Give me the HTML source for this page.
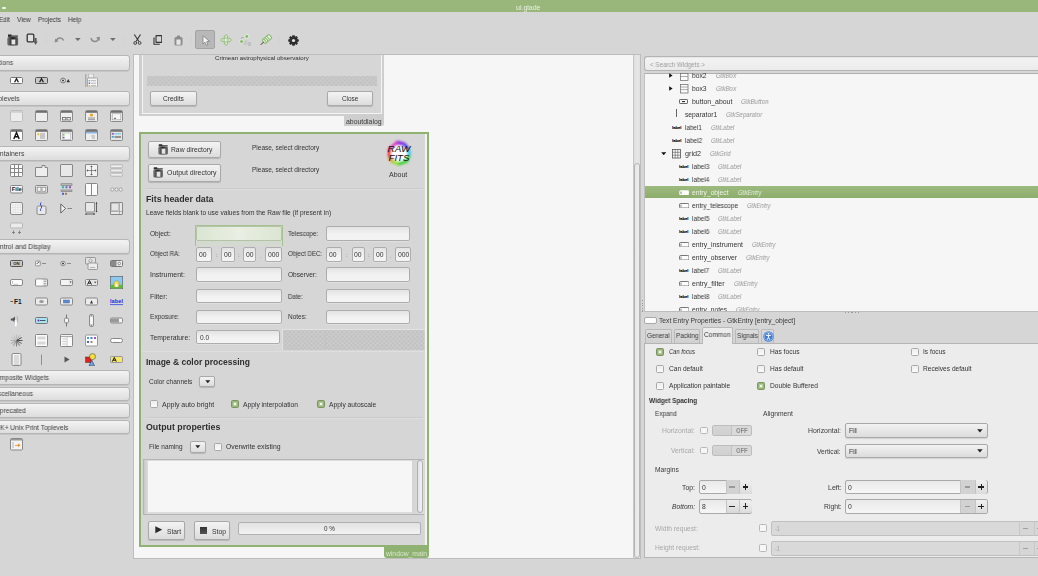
<!DOCTYPE html>
<html><head><meta charset="utf-8">
<style>
*{box-sizing:border-box;margin:0;padding:0}
html,body{width:1038px;height:576px;overflow:hidden;background:#d6d6d6;font-family:"Liberation Sans",sans-serif;color:#3c3c3c;position:relative}
.a{position:absolute}
.t{position:absolute;white-space:nowrap;line-height:1;will-change:transform}
.btn{position:absolute;border:1px solid #a9a9a9;border-radius:2px;background:linear-gradient(#f4f4f4,#dcdcdc);box-shadow:0 1px 1px rgba(0,0,0,.13)}
.ent{position:absolute;border:1px solid #adadad;border-radius:2px;background:linear-gradient(#e2e2e2,#f0f0f0 45%,#f3f3f3);box-shadow:0 1px 0 rgba(255,255,255,.5)}
.cb{position:absolute;width:8px;height:8px;border:1px solid #a8a8a8;border-radius:1.5px;background:linear-gradient(#efefef,#f9f9f9)}
.cbx{position:absolute;width:8px;height:8px;border:1px solid #6f9352;border-radius:1.5px;background:#8cae6d}
.cbx::before,.cbx::after{content:"";position:absolute;left:3px;top:1px;width:1px;height:4px;background:#f2f7ee;transform:rotate(45deg)}
.cbx::after{transform:rotate(-45deg)}
.ph{position:absolute;left:-8px;width:138px;border:1px solid #b5b5b5;border-radius:3px;background:linear-gradient(#f3f3f3,#dddddd);box-shadow:0 1px 0 rgba(0,0,0,.08)}
.chk{background-color:#cfcfcf;background-image:linear-gradient(45deg,#c2c2c2 25%,transparent 25%,transparent 75%,#c2c2c2 75%),linear-gradient(45deg,#c2c2c2 25%,transparent 25%,transparent 75%,#c2c2c2 75%);background-size:4px 4px;background-position:0 0,2px 2px}
</style></head><body>
<div class="a" style="left:0px;top:0px;width:1038px;height:12px;background:#9ab77b"></div>
<div class="a" style="left:2px;top:7px;width:4px;height:1.5px;background:#f0f4ec;border-radius:1px"></div>
<div class="t" style="left:516.3px;top:3px;line-height:10px;font-size:6.994px;color:#e9f0e2;font-weight:normal;font-style:normal;">ui.glade</div>
<div class="t" style="left:-0.8px;top:15px;line-height:10px;font-size:6.9px;color:#383838;font-weight:normal;font-style:normal;transform:scaleX(0.9082);transform-origin:0 0;">Edit</div>
<div class="t" style="left:16.9px;top:15px;line-height:10px;font-size:6.9px;color:#383838;font-weight:normal;font-style:normal;transform:scaleX(0.9370);transform-origin:0 0;">View</div>
<div class="t" style="left:38.2px;top:15px;line-height:10px;font-size:6.9px;color:#383838;font-weight:normal;font-style:normal;transform:scaleX(0.9187);transform-origin:0 0;">Projects</div>
<div class="t" style="left:68.1px;top:15px;line-height:10px;font-size:6.9px;color:#383838;font-weight:normal;font-style:normal;transform:scaleX(0.9437);transform-origin:0 0;">Help</div>
<svg class="a" style="left:7px;top:34px" width="12" height="12" viewBox="0 0 12 12"><defs><linearGradient id="og" x1="0" x2="1"><stop offset="0" stop-color="#777"/><stop offset=".5" stop-color="#222"/><stop offset="1" stop-color="#666"/></linearGradient></defs><rect x="1" y="0.5" width="3.5" height="2" fill="#222"/><rect x="1" y="1.5" width="10" height="1.2" fill="#333"/><rect x="0.3" y="3" width="10.8" height="8.6" rx="1.5" fill="url(#og)"/><rect x="4.5" y="5.5" width="3.8" height="5" fill="#e8e8e8"/></svg>
<svg class="a" style="left:26px;top:33px" width="13" height="13" viewBox="0 0 13 13"><rect x="1.2" y="1.2" width="6.6" height="7.6" rx="1" fill="#e0e0e0" stroke="#333" stroke-width="1.3"/><rect x="8.6" y="5" width="2" height="3.5" fill="#555"/><path d="M7.6 8.3h4l-2 3.6z" fill="#555"/></svg>
<div class="a" style="left:46px;top:33px;width:1px;height:13px;background:linear-gradient(rgba(0,0,0,0),rgba(0,0,0,.025),rgba(0,0,0,0))"></div>
<div class="a" style="left:123.5px;top:33px;width:1px;height:13px;background:linear-gradient(rgba(0,0,0,0),rgba(0,0,0,.025),rgba(0,0,0,0))"></div>
<div class="a" style="left:191px;top:33px;width:1px;height:13px;background:linear-gradient(rgba(0,0,0,0),rgba(0,0,0,.025),rgba(0,0,0,0))"></div>
<div class="a" style="left:279px;top:33px;width:1px;height:13px;background:linear-gradient(rgba(0,0,0,0),rgba(0,0,0,.025),rgba(0,0,0,0))"></div>
<svg class="a" style="left:54px;top:36px" width="11" height="7" viewBox="0 0 11 7"><path d="M2 5.5 C3 1.5 7.5 0.5 9.8 4.5" fill="none" stroke="#8c8c8c" stroke-width="1.4"/><path d="M0.6 6.5 L1.2 2.5 L4.5 5.2z" fill="#8c8c8c"/></svg>
<svg class="a" style="left:74.7px;top:38px" width="6" height="3.5" viewBox="0 0 6 3.5"><path d="M0 0h5.7L2.85 3z" fill="#6e6e6e"/></svg>
<svg class="a" style="left:110.1px;top:38px" width="6" height="3.5" viewBox="0 0 6 3.5"><path d="M0 0h5.7L2.85 3z" fill="#6e6e6e"/></svg>
<svg class="a" style="left:90px;top:36px" width="11" height="7" viewBox="0 0 11 7"><path d="M1 2 C2 6.5 7 6.5 8.5 3" fill="none" stroke="#8c8c8c" stroke-width="1.4"/><path d="M6 1.4 L10 0.8 L9.5 5z" fill="#8c8c8c"/></svg>
<svg class="a" style="left:133px;top:34px" width="9" height="11" viewBox="0 0 9 11"><path d="M1.3 0.5 L6 7.5 M7.5 0.5 L3 7.5" stroke="#333" stroke-width="1.1" fill="none"/><circle cx="2.2" cy="9" r="1.4" fill="none" stroke="#444" stroke-width="1"/><circle cx="6.6" cy="9" r="1.4" fill="none" stroke="#444" stroke-width="1"/></svg>
<svg class="a" style="left:152.5px;top:35px" width="9.5" height="10" viewBox="0 0 9.5 10"><rect x="3" y="0.6" width="5.8" height="6.8" rx=".5" fill="none" stroke="#333" stroke-width="1.1"/><path d="M1 2.5 V9.2 H6.8" fill="none" stroke="#333" stroke-width="1.1"/></svg>
<svg class="a" style="left:173.5px;top:34.5px" width="9" height="11" viewBox="0 0 9 11"><rect x="0.5" y="2" width="8" height="8.6" rx="1.5" fill="#8c8c8c"/><rect x="2.8" y="0.5" width="3.4" height="2.5" rx="1" fill="#8c8c8c"/><rect x="2.4" y="4.5" width="4.2" height="5.2" fill="#e6e6e6"/></svg>
<div class="a" style="left:195px;top:30px;width:20px;height:19px;background:#b8b8b8;border:1px solid #a3a3a3;border-radius:2px"></div>
<svg class="a" style="left:201.5px;top:35px" width="9" height="11" viewBox="0 0 9 11"><path d="M1 0.8 V9 L3 7.3 L4.5 10.3 L6 9.6 L4.6 6.6 L7.6 6.4z" fill="#f4f4f4" stroke="#777" stroke-width=".7"/></svg>
<svg class="a" style="left:219.5px;top:34px" width="12" height="12" viewBox="0 0 12 12"><path d="M6 0.5 L8 2.8 H7 V5 H9.2 V4 L11.5 6 L9.2 8 V7 H7 V9.2 H8 L6 11.5 L4 9.2 H5 V7 H2.8 V8 L0.5 6 L2.8 4 V5 H5 V2.8 H4z" fill="#dfeed6" stroke="#8ab86f" stroke-width=".9"/></svg>
<svg class="a" style="left:239px;top:34px" width="13" height="12" viewBox="0 0 13 12"><path d="M2.5 3.5 H5 M2.5 3.5 V5.5" stroke="#b0b0b0" stroke-width="1" fill="none"/><rect x="4" y="6.5" width="4.5" height="4.5" fill="#c8c8c8"/><path d="M9 9 H12 M9 11 H12" stroke="#a8a8a8" stroke-width=".9"/><circle cx="7.8" cy="2.4" r="2" fill="#86bc68" stroke="#f0f6ea" stroke-width=".8"/><circle cx="2.6" cy="7.6" r="2" fill="#86bc68" stroke="#f0f6ea" stroke-width=".8"/></svg>
<svg class="a" style="left:260px;top:33.5px" width="12.5" height="11.5" viewBox="0 0 12.5 11.5"><g transform="rotate(-40 7 5)"><rect x="2.5" y="2.6" width="9" height="4.8" rx="1" fill="#e9f3e3" stroke="#86b86a" stroke-width="1"/><path d="M4.6 2.8 V7.2 M6.6 2.8 V7.2 M8.6 2.8 V7.2" stroke="#86b86a" stroke-width="1"/></g><path d="M0.8 10.8 L3.5 8" stroke="#333" stroke-width="1"/></svg>
<svg class="a" style="left:287.5px;top:34.5px" width="11" height="11" viewBox="0 0 11 11"><g transform="translate(5.5 5.5)"><path d="M-1.1 -5.3 H1.1 L1.5 -3.7 L2.9 -4.5 L4.4 -3 L3.6 -1.6 L5.3 -1.1 V1.1 L3.6 1.6 L4.4 3 L3 4.4 L1.6 3.6 L1.1 5.3 H-1.1 L-1.6 3.6 L-3 4.4 L-4.4 3 L-3.6 1.6 L-5.3 1.1 V-1.1 L-3.6 -1.6 L-4.4 -3 L-3 -4.4 L-1.6 -3.6z" fill="#2e2e2e"/><circle r="1.6" fill="#e6e6e6"/></g></svg>
<div class="ph" style="top:55px;height:15.5px"></div>
<div class="t" style="left:-9px;top:58px;line-height:10px;font-size:6.9px;color:#3e3e3e;font-weight:normal;font-style:normal;transform:scaleX(0.9766);transform-origin:0 0;">Actions</div>
<div class="ph" style="top:91px;height:14.5px"></div>
<div class="t" style="left:-9px;top:94px;line-height:10px;font-size:6.9px;color:#3e3e3e;font-weight:normal;font-style:normal;transform:scaleX(0.9939);transform-origin:0 0;">Toplevels</div>
<div class="ph" style="top:146px;height:14.5px"></div>
<div class="t" style="left:-9px;top:149px;line-height:10px;font-size:6.9px;color:#3e3e3e;font-weight:normal;font-style:normal;transform:scaleX(0.9980);transform-origin:0 0;">Containers</div>
<div class="ph" style="top:239px;height:14.5px"></div>
<div class="t" style="left:-9px;top:242px;line-height:10px;font-size:6.9px;color:#3e3e3e;font-weight:normal;font-style:normal;transform:scaleX(0.9898);transform-origin:0 0;">Control and Display</div>
<div class="ph" style="top:370px;height:14.5px"></div>
<div class="t" style="left:-9px;top:373px;line-height:10px;font-size:6.9px;color:#3e3e3e;font-weight:normal;font-style:normal;transform:scaleX(0.9695);transform-origin:0 0;">Composite Widgets</div>
<div class="ph" style="top:386.5px;height:14.5px"></div>
<div class="t" style="left:-9px;top:389px;line-height:10px;font-size:6.9px;color:#3e3e3e;font-weight:normal;font-style:normal;transform:scaleX(0.9605);transform-origin:0 0;">Miscellaneous</div>
<div class="ph" style="top:403px;height:14.5px"></div>
<div class="t" style="left:-9px;top:406px;line-height:10px;font-size:6.9px;color:#3e3e3e;font-weight:normal;font-style:normal;transform:scaleX(0.9811);transform-origin:0 0;">Deprecated</div>
<div class="ph" style="top:419.5px;height:14px"></div>
<div class="t" style="left:-9px;top:423px;line-height:10px;font-size:6.9px;color:#3e3e3e;font-weight:normal;font-style:normal;transform:scaleX(0.9603);transform-origin:0 0;">GTK+ Unix Print Toplevels</div>
<svg class="a" style="left:10px;top:74.0px" width="13" height="13" viewBox="0 0 13 13"><rect x=".5" y="3.5" width="12" height="6" rx="1" fill="#fafafa" stroke="#777"/><path d="M4.6 8.3 L6.5 4.6 L8.4 8.3" fill="none" stroke="#222" stroke-width="1.3"/></svg>
<svg class="a" style="left:35px;top:74.0px" width="13" height="13" viewBox="0 0 13 13"><rect x=".5" y="3.5" width="12" height="6" rx="1" fill="#c9c9c9" stroke="#555"/><path d="M4.6 8.3 L6.5 4.6 L8.4 8.3" fill="none" stroke="#222" stroke-width="1.3"/></svg>
<svg class="a" style="left:60px;top:74.0px" width="13" height="13" viewBox="0 0 13 13"><circle cx="3" cy="6.5" r="2.4" fill="#f5f5f5" stroke="#555" stroke-width=".8"/><circle cx="3" cy="6.5" r="1" fill="#333"/><path d="M6.5 8.2 L8.2 5 L10 8.2z" fill="#333"/></svg>
<svg class="a" style="left:85px;top:74.0px" width="13" height="13" viewBox="0 0 13 13"><path d="M.8 0 V13" stroke="#999" stroke-width="1"/><rect x="3.5" y="0" width="5" height="4" fill="#eee" stroke="#aaa" stroke-width=".6"/><rect x="2.5" y="4" width="10" height="9" rx=".8" fill="#f6f6f6" stroke="#999" stroke-width=".8"/><rect x="3.6" y="6" width="1.6" height="1.4" fill="#5bb8c8"/><rect x="3.6" y="8.5" width="1.6" height="1.4" fill="#8a4cc8"/><rect x="3.6" y="11" width="1.6" height="1.2" fill="#e8b02c"/><path d="M6 6.7H11 M6 9.2H11 M6 11.6H11" stroke="#999" stroke-width=".7"/></svg>
<svg class="a" style="left:10px;top:109.5px" width="13" height="13" viewBox="0 0 13 13"><rect x=".5" y=".5" width="12" height="11" rx="1" fill="#ececec" stroke="#bdbdbd"/><rect x="1" y="1" width="11" height="1.8" fill="#cfcfcf"/></svg>
<svg class="a" style="left:35px;top:109.5px" width="13" height="13" viewBox="0 0 13 13"><rect x=".5" y=".5" width="12" height="11" rx="1" fill="#eeeeee" stroke="#8a8a8a"/><rect x="1" y="1" width="11" height="1.8" fill="#6f6f6f"/></svg>
<svg class="a" style="left:60px;top:109.5px" width="13" height="13" viewBox="0 0 13 13"><rect x=".5" y=".5" width="12" height="11" rx="1" fill="#eeeeee" stroke="#8a8a8a"/><rect x="1" y="1" width="11" height="1.8" fill="#6f6f6f"/><rect x="2.5" y="7.5" width="3.3" height="2.5" fill="none" stroke="#666" stroke-width=".8"/><rect x="7" y="7.5" width="3.3" height="2.5" fill="none" stroke="#666" stroke-width=".8"/></svg>
<svg class="a" style="left:85px;top:109.5px" width="13" height="13" viewBox="0 0 13 13"><rect x=".5" y=".5" width="12" height="11" rx="1" fill="#eeeeee" stroke="#8a8a8a"/><rect x="1" y="1" width="11" height="1.8" fill="#6f6f6f"/><circle cx="6.5" cy="5" r="1.6" fill="#f0a020"/><path d="M3 8H10 M3 9.7H10" stroke="#888" stroke-width=".9"/></svg>
<svg class="a" style="left:110px;top:109.5px" width="13" height="13" viewBox="0 0 13 13"><rect x=".5" y=".5" width="12" height="11" rx="1" fill="#eeeeee" stroke="#8a8a8a"/><rect x="1" y="1" width="11" height="1.8" fill="#6f6f6f"/><rect x="2.2" y="3.8" width="8.6" height="6" fill="#f8f8f8" stroke="#999" stroke-width=".6"/><path d="M4 8.3H6" stroke="#444" stroke-width=".9"/></svg>
<svg class="a" style="left:10px;top:128.5px" width="13" height="13" viewBox="0 0 13 13"><rect x=".5" y=".5" width="12" height="11" rx="1" fill="#fdfdfd" stroke="#8a8a8a"/><rect x="1" y="1" width="11" height="1.8" fill="#6f6f6f"/><path d="M3.8 10 L6.5 3.5 L9.2 10 M4.8 7.8 H8.2" fill="none" stroke="#111" stroke-width="1.4"/></svg>
<svg class="a" style="left:35px;top:128.5px" width="13" height="13" viewBox="0 0 13 13"><rect x=".5" y=".5" width="12" height="11" rx="1" fill="#eeeeee" stroke="#8a8a8a"/><rect x="1" y="1" width="11" height="1.8" fill="#6f6f6f"/><circle cx="3.3" cy="5.3" r="1.1" fill="#f0c020"/><path d="M5 5H10 M5 7H10 M5 9H10" stroke="#a0a0a0" stroke-width="1"/></svg>
<svg class="a" style="left:60px;top:128.5px" width="13" height="13" viewBox="0 0 13 13"><rect x=".5" y=".5" width="12" height="11" rx="1" fill="#eeeeee" stroke="#8a8a8a"/><rect x="1" y="1" width="11" height="1.8" fill="#6f6f6f"/><rect x="2.3" y="4" width="8.5" height="6.5" fill="#f8f8f8" stroke="#999" stroke-width=".5"/><rect x="3" y="5" width="1.5" height="1.6" fill="#7bc64a"/><rect x="3" y="7.8" width="1.5" height="1.6" fill="#8a4cc8"/></svg>
<svg class="a" style="left:85px;top:128.5px" width="13" height="13" viewBox="0 0 13 13"><rect x=".5" y=".5" width="12" height="11" rx="1" fill="#eeeeee" stroke="#8a8a8a"/><rect x="1" y="1" width="11" height="1.8" fill="#6f6f6f"/><rect x="1" y="3" width="11" height="1.5" fill="#8cb4e0"/><path d="M6 7H10 M7 9H10" stroke="#aaa" stroke-width="1"/></svg>
<svg class="a" style="left:110px;top:128.5px" width="13" height="13" viewBox="0 0 13 13"><rect x=".5" y=".5" width="12" height="11" rx="1" fill="#e4e4e4" stroke="#8a8a8a"/><rect x="1" y="1" width="11" height="1.8" fill="#777"/><rect x="1.8" y="4" width="2" height="1.6" fill="#8a4cc8"/><rect x="1.8" y="7" width="2" height="1.6" fill="#3aa0e0"/><rect x="4.5" y="4" width="6.5" height="1.6" fill="#8fd0e8"/><path d="M4.5 8 H11" stroke="#444" stroke-width="1"/></svg>
<svg class="a" style="left:10px;top:163.5px" width="13" height="13" viewBox="0 0 13 13"><rect x=".5" y=".5" width="12" height="12" rx="1" fill="#fafafa" stroke="#888"/><path d="M4.5 1V12 M8.5 1V12 M1 4.5H12 M1 8.5H12" stroke="#888" stroke-width="1"/></svg>
<svg class="a" style="left:35px;top:163.5px" width="13" height="13" viewBox="0 0 13 13"><path d="M.5 3.5 H7 V1.5 H10 V3.5 H12.5 V12.5 H.5z" fill="#eee" stroke="#888"/></svg>
<svg class="a" style="left:60px;top:163.5px" width="13" height="13" viewBox="0 0 13 13"><rect x=".5" y=".5" width="12" height="12" rx=".5" fill="#e8e8e8" stroke="#888"/></svg>
<svg class="a" style="left:85px;top:163.5px" width="13" height="13" viewBox="0 0 13 13"><rect x=".5" y=".5" width="12" height="12" rx=".5" fill="#f2f2f2" stroke="#888"/><path d="M6.5 2V11 M2 6.5H11" stroke="#666" stroke-width=".7"/><path d="M6.5 1.5l-1.3 1.5h2.6z M6.5 11.5l-1.3-1.5h2.6z M1.5 6.5l1.5-1.3v2.6z M11.5 6.5l-1.5-1.3v2.6z" fill="#555"/></svg>
<svg class="a" style="left:110px;top:163.5px" width="13" height="13" viewBox="0 0 13 13"><rect x=".5" y=".8" width="12" height="3" rx="1.2" fill="#eee" stroke="#aaa" stroke-width=".8"/><rect x=".5" y="5" width="12" height="3" rx="1.2" fill="#eee" stroke="#aaa" stroke-width=".8"/><rect x=".5" y="9.2" width="12" height="3" rx="1.2" fill="#eee" stroke="#aaa" stroke-width=".8"/></svg>
<svg class="a" style="left:10px;top:182.5px" width="13" height="13" viewBox="0 0 13 13"><rect x=".5" y="2.5" width="12" height="7.5" rx="1" fill="#f4f4f4" stroke="#888"/><text x="1.8" y="8.4" font-size="5.4" font-weight="bold" font-family="Liberation Sans" fill="#222" textLength="10" lengthAdjust="spacingAndGlyphs">File</text></svg>
<svg class="a" style="left:35px;top:182.5px" width="13" height="13" viewBox="0 0 13 13"><rect x=".5" y="2.5" width="12" height="7.5" rx="1" fill="#e4e4e4" stroke="#888"/><rect x="2.2" y="4.2" width="3.8" height="4" fill="#f6f6f6" stroke="#777" stroke-width=".6"/><rect x="7" y="4.2" width="3.8" height="4" fill="#f6f6f6" stroke="#777" stroke-width=".6"/></svg>
<svg class="a" style="left:60px;top:182.5px" width="13" height="13" viewBox="0 0 13 13"><rect x="1" y=".8" width="11" height="1.6" fill="#bbb" stroke="#666" stroke-width=".5"/><rect x="1" y="7" width="11" height="1.6" fill="#bbb" stroke="#666" stroke-width=".5"/><rect x="2" y="3.2" width="2" height="2" fill="#3cb0b0"/><rect x="5.5" y="3.2" width="2" height="2" fill="#4a7ad8"/><rect x="9" y="3.2" width="2" height="2" fill="#9a4cc8"/><rect x="2" y="9.8" width="2" height="2" fill="#4a60d0"/><rect x="5" y="9.8" width="2" height="2" fill="#a08050"/></svg>
<svg class="a" style="left:85px;top:182.5px" width="13" height="13" viewBox="0 0 13 13"><rect x=".5" y=".5" width="12" height="12" rx="1" fill="#fbfbfb" stroke="#888"/><path d="M6.5 1V12" stroke="#888"/></svg>
<svg class="a" style="left:110px;top:182.5px" width="13" height="13" viewBox="0 0 13 13"><circle cx="2.3" cy="6.5" r="1.6" fill="#f2f2f2" stroke="#888" stroke-width=".7"/><circle cx="6.5" cy="6.5" r="1.6" fill="#f2f2f2" stroke="#888" stroke-width=".7"/><circle cx="10.7" cy="6.5" r="1.6" fill="#f2f2f2" stroke="#888" stroke-width=".7"/></svg>
<svg class="a" style="left:10px;top:202.0px" width="13" height="13" viewBox="0 0 13 13"><rect x=".5" y=".5" width="12" height="12" rx="1.5" fill="#f6f6f6" stroke="#888"/><path d="M3 1.5V11.5 M5.5 1.5V11.5 M8 1.5V11.5 M10.5 1.5V11.5 M1.5 3H11.5 M1.5 5.5H11.5 M1.5 8H11.5 M1.5 10.5H11.5" stroke="#ddd" stroke-width=".6"/></svg>
<svg class="a" style="left:35px;top:202.0px" width="13" height="13" viewBox="0 0 13 13"><rect x="2" y="4" width="9" height="8.5" rx="1.5" fill="#e8e8e8" stroke="#888"/><path d="M6 .5 Q4.5 2 6 3.5 Q7.5 5 6 6.5 Q4.5 8 6 9" fill="none" stroke="#3050e8" stroke-width="1"/></svg>
<svg class="a" style="left:60px;top:202.0px" width="13" height="13" viewBox="0 0 13 13"><path d="M.8 2 V11 L5.5 6.5z" fill="#f4f4f4" stroke="#555" stroke-width=".9"/><path d="M7.5 6.5 H12" stroke="#888" stroke-width="1"/></svg>
<svg class="a" style="left:85px;top:202.0px" width="13" height="13" viewBox="0 0 13 13"><rect x=".5" y=".5" width="9" height="9.5" rx=".5" fill="#e8e8e8" stroke="#888"/><path d="M11.5 .5V10 M.5 12 H10" stroke="#444" stroke-width=".8"/><path d="M11.5 0l-1 1.5h2z M11.5 10.5l-1-1.5h2z M0 12l1.5-1v2z M10 12l-1.5-1v2z" fill="#444"/></svg>
<svg class="a" style="left:110px;top:202.0px" width="13" height="13" viewBox="0 0 13 13"><rect x=".5" y=".5" width="12" height="12" rx=".5" fill="#e8e8e8" stroke="#888"/><rect x="1.5" y="1.5" width="7" height="7" fill="#e4e4e4" stroke="#999" stroke-width=".5"/><path d="M9.5 1V12 M1 9.5H12" stroke="#888" stroke-width=".6"/></svg>
<svg class="a" style="left:10px;top:221.5px" width="13" height="13" viewBox="0 0 13 13"><rect x=".5" y="1" width="12" height="5" rx="1" fill="#ebebeb" stroke="#b8b8b8"/><path d="M3.5 8.5V12 M2 10.5H5 M9.5 8.5V12 M8 10.5H11" stroke="#777" stroke-width=".8"/></svg>
<svg class="a" style="left:10px;top:257.0px" width="13" height="13" viewBox="0 0 13 13"><rect x=".5" y="3.5" width="12" height="6" rx="1" fill="#c8c8c8" stroke="#555"/><text x="3.2" y="8.4" font-size="4.2" font-weight="bold" font-family="Liberation Sans" fill="#222">ON</text></svg>
<svg class="a" style="left:35px;top:257.0px" width="13" height="13" viewBox="0 0 13 13"><rect x=".5" y="4" width="4.8" height="4.8" rx=".8" fill="#f4f4f4" stroke="#777" stroke-width=".7"/><path d="M1.8 7 L3 5.5 L4.3 5" stroke="#333" stroke-width=".8" fill="none"/><path d="M7 6.5H11" stroke="#777" stroke-width=".8"/></svg>
<svg class="a" style="left:60px;top:257.0px" width="13" height="13" viewBox="0 0 13 13"><circle cx="3" cy="6.5" r="2.3" fill="#f4f4f4" stroke="#666" stroke-width=".7"/><circle cx="3" cy="6.5" r="1" fill="#333"/><path d="M7 6.5H11" stroke="#777" stroke-width=".8"/></svg>
<svg class="a" style="left:85px;top:257.0px" width="13" height="13" viewBox="0 0 13 13"><rect x=".5" y=".5" width="10" height="6.5" rx=".8" fill="#e2e2e2" stroke="#888" stroke-width=".8"/><path d="M5.5 2 L7.5 3.8 L5.5 5.5 L3.5 3.8z" fill="none" stroke="#888" stroke-width=".7"/><rect x="3" y="6" width="9.5" height="6.5" rx=".8" fill="#ececec" stroke="#888" stroke-width=".8"/><path d="M5 10.5H10" stroke="#999" stroke-width=".7"/></svg>
<svg class="a" style="left:110px;top:257.0px" width="13" height="13" viewBox="0 0 13 13"><rect x=".5" y="3.5" width="12" height="6" rx="1" fill="#f2f2f2" stroke="#777"/><rect x="1" y="4" width="5.5" height="5" fill="#8a8a8a"/><circle cx="9.2" cy="6.5" r="1.4" fill="none" stroke="#666" stroke-width=".7"/></svg>
<svg class="a" style="left:10px;top:276.0px" width="13" height="13" viewBox="0 0 13 13"><rect x=".5" y="3.5" width="12" height="6" rx="1.5" fill="#fdfdfd" stroke="#888"/><path d="M2.5 5V8 M3.5 8.3H8" stroke="#999" stroke-width=".6"/></svg>
<svg class="a" style="left:35px;top:276.0px" width="13" height="13" viewBox="0 0 13 13"><rect x=".5" y="3" width="12" height="7" rx="1" fill="#e4e4e4" stroke="#888"/><rect x="1.2" y="3.6" width="6.5" height="5.8" fill="#fdfdfd"/><path d="M10 4.5l-1 1h2z M10 8.5l-1-1h2z" fill="#555"/></svg>
<svg class="a" style="left:60px;top:276.0px" width="13" height="13" viewBox="0 0 13 13"><rect x=".5" y="3.5" width="12" height="6" rx="1" fill="#e6e6e6" stroke="#888"/><rect x="1.2" y="4.1" width="7.5" height="4.8" fill="#f4f4f4"/><path d="M9.6 5.6h2l-1 1.5z" fill="#333"/></svg>
<svg class="a" style="left:85px;top:276.0px" width="13" height="13" viewBox="0 0 13 13"><rect x=".5" y="3.5" width="12" height="6" rx="1" fill="#e6e6e6" stroke="#888"/><path d="M2.5 8.6 L4.5 4.5 L6.5 8.6 M3.3 7.2H5.7" fill="none" stroke="#222" stroke-width="1"/><path d="M9 5.8h2.4l-1.2 1.5z" fill="#333"/></svg>
<svg class="a" style="left:110px;top:276.0px" width="13" height="13" viewBox="0 0 13 13"><rect x=".3" y=".3" width="12.4" height="12.4" fill="#8cc8f0" stroke="#555" stroke-width=".6"/><rect x=".6" y="8.8" width="11.8" height="3.6" fill="#58c030"/><path d="M4 11 V6.5 Q6.5 2.8 9 6.5 V11z" fill="#f6e04a" stroke="#886" stroke-width=".5"/><rect x="5.6" y="8" width="1.8" height="3" fill="#fff"/></svg>
<svg class="a" style="left:10px;top:295.0px" width="13" height="13" viewBox="0 0 13 13"><path d="M.5 6.5H3" stroke="#333" stroke-width=".8"/><text x="4" y="9" font-size="6.5" font-weight="bold" font-family="Liberation Sans" fill="#111">F1</text></svg>
<svg class="a" style="left:35px;top:295.0px" width="13" height="13" viewBox="0 0 13 13"><rect x=".5" y="3" width="12" height="7" rx="1.2" fill="#ececec" stroke="#888"/><ellipse cx="6.5" cy="6.5" rx="2.3" ry="1.5" fill="#999"/></svg>
<svg class="a" style="left:60px;top:295.0px" width="13" height="13" viewBox="0 0 13 13"><rect x=".5" y="3" width="12" height="7" rx="1.2" fill="#ececec" stroke="#888"/><rect x="3.5" y="5" width="6" height="3" fill="#5a90d8" stroke="#335" stroke-width=".3"/></svg>
<svg class="a" style="left:85px;top:295.0px" width="13" height="13" viewBox="0 0 13 13"><rect x=".5" y="3" width="12" height="7" rx="1.2" fill="#ececec" stroke="#888"/><path d="M5 8.5 L6.5 5.2 L8 8.5z" fill="#333"/></svg>
<svg class="a" style="left:110px;top:295.0px" width="13" height="13" viewBox="0 0 13 13"><text x="0" y="8.3" font-size="5.6" font-weight="bold" font-family="Liberation Sans" fill="#1a2ee8" textLength="13" lengthAdjust="spacingAndGlyphs">label</text><path d="M0 9.6H13" stroke="#1a2ee8" stroke-width=".7"/></svg>
<svg class="a" style="left:10px;top:314.0px" width="13" height="13" viewBox="0 0 13 13"><path d="M.8 4.5H2.5L5 2.5V8.5L2.5 6.5H.8z" fill="#555"/><path d="M7 2.5 Q8.5 5.5 7 8.5" stroke="#99a" stroke-width=".7" fill="none"/><rect x="4.8" y="6" width="2.2" height="6.8" fill="#fdfdfd" stroke="#ccd" stroke-width=".4"/></svg>
<svg class="a" style="left:35px;top:314.0px" width="13" height="13" viewBox="0 0 13 13"><rect x=".5" y="3.5" width="12" height="6" rx="1" fill="#a8e4f0" stroke="#777"/><circle cx="3.5" cy="6.5" r="1" fill="#8020c0"/><path d="M5 6.5H10.5" stroke="#333" stroke-width=".8"/></svg>
<svg class="a" style="left:60px;top:314.0px" width="13" height="13" viewBox="0 0 13 13"><path d="M6.5 .5V12.5" stroke="#777" stroke-width="1"/><rect x="4.5" y="4.2" width="4" height="4.6" rx="1" fill="#f4f4f4" stroke="#777" stroke-width=".8"/></svg>
<svg class="a" style="left:85px;top:314.0px" width="13" height="13" viewBox="0 0 13 13"><rect x="4.5" y=".5" width="4" height="12" rx="1.5" fill="#e4e4e4" stroke="#777" stroke-width=".8"/><rect x="5.3" y="3" width="2.4" height="7" fill="#fafafa"/><path d="M6.5 1.2l-.9 1h1.8z M6.5 11.8l-.9-1h1.8z" fill="#444"/></svg>
<svg class="a" style="left:110px;top:314.0px" width="13" height="13" viewBox="0 0 13 13"><rect x=".5" y="4" width="12" height="5" rx="1.2" fill="#f6f6f6" stroke="#888"/><rect x="1" y="4.5" width="8" height="4" fill="#9a9a9a"/></svg>
<svg class="a" style="left:10px;top:333.5px" width="13" height="13" viewBox="0 0 13 13"><path d="M6.5 6.5 L12.50 6.50" stroke="#444" stroke-width=".9"/><path d="M6.5 6.5 L11.70 9.50" stroke="#555" stroke-width=".9"/><path d="M6.5 6.5 L9.50 11.70" stroke="#666" stroke-width=".9"/><path d="M6.5 6.5 L6.50 12.50" stroke="#777" stroke-width=".9"/><path d="M6.5 6.5 L3.50 11.70" stroke="#888" stroke-width=".9"/><path d="M6.5 6.5 L1.30 9.50" stroke="#999" stroke-width=".9"/><path d="M6.5 6.5 L0.50 6.50" stroke="#aaa" stroke-width=".9"/><path d="M6.5 6.5 L1.30 3.50" stroke="#bbb" stroke-width=".9"/><path d="M6.5 6.5 L3.50 1.30" stroke="#bbb" stroke-width=".9"/><path d="M6.5 6.5 L6.50 0.50" stroke="#bbb" stroke-width=".9"/><path d="M6.5 6.5 L9.50 1.30" stroke="#aaa" stroke-width=".9"/><path d="M6.5 6.5 L11.70 3.50" stroke="#333" stroke-width=".9"/></svg>
<svg class="a" style="left:35px;top:333.5px" width="13" height="13" viewBox="0 0 13 13"><rect x=".5" y=".5" width="12" height="12" rx=".8" fill="#fbfbfb" stroke="#888"/><rect x="2.5" y="2.5" width="8" height="3" fill="#d8d8d8"/><rect x="2.5" y="7.5" width="8" height="3" fill="#d8d8d8"/></svg>
<svg class="a" style="left:60px;top:333.5px" width="13" height="13" viewBox="0 0 13 13"><rect x=".5" y=".5" width="12" height="12" rx=".8" fill="#fbfbfb" stroke="#888"/><path d="M1 2.5H12" stroke="#aaa" stroke-width="1.2"/><path d="M2.5 5H6 M2.5 7.5H6 M2.5 10H6 M7 3V12" stroke="#bbb" stroke-width=".8"/></svg>
<svg class="a" style="left:85px;top:333.5px" width="13" height="13" viewBox="0 0 13 13"><rect x=".5" y="1" width="12" height="11" rx=".8" fill="#fbfbfb" stroke="#999"/><rect x="2" y="3" width="2" height="2" fill="#40b0b0"/><rect x="5.5" y="3" width="2" height="2" fill="#4a7ad8"/><rect x="9" y="3" width="2" height="2" fill="#a050d0"/><rect x="2" y="7" width="2" height="2" fill="#4a60d0"/><rect x="5.5" y="7" width="2" height="2" fill="#b08850"/></svg>
<svg class="a" style="left:110px;top:333.5px" width="13" height="13" viewBox="0 0 13 13"><rect x=".5" y="4.5" width="12" height="4" rx="2" fill="#fdfdfd" stroke="#888"/></svg>
<svg class="a" style="left:10px;top:352.5px" width="13" height="13" viewBox="0 0 13 13"><rect x="2" y=".5" width="9" height="12" rx="1.2" fill="#f4f4f4" stroke="#888"/><path d="M4 3H9 M4 5H9 M4 7H9 M4 9H9 M4 11H9" stroke="#aaa" stroke-width=".7"/></svg>
<svg class="a" style="left:35px;top:352.5px" width="13" height="13" viewBox="0 0 13 13"><path d="M6.5 1.5V12" stroke="#888" stroke-width=".9"/></svg>
<svg class="a" style="left:60px;top:352.5px" width="13" height="13" viewBox="0 0 13 13"><path d="M4.5 3.5 L9.5 6.5 L4.5 9.5z" fill="#555"/></svg>
<svg class="a" style="left:85px;top:352.5px" width="13" height="13" viewBox="0 0 13 13"><rect x="0.5" y="4" width="5.5" height="5.5" fill="#e42020" stroke="#333" stroke-width=".5"/><path d="M4 12.8 L6.8 7 L9.6 12.8z" fill="#6a9ee8" stroke="#333" stroke-width=".5"/><circle cx="7.5" cy="3.6" r="3" fill="#f8e040" stroke="#333" stroke-width=".5"/></svg>
<svg class="a" style="left:110px;top:352.5px" width="13" height="13" viewBox="0 0 13 13"><rect x=".5" y="3.5" width="12" height="6" rx=".8" fill="#f6e66a" stroke="#999"/><path d="M2.3 8.6 L4.3 4.5 L6.3 8.6 M3.1 7.2H5.5" fill="none" stroke="#111" stroke-width="1"/></svg>
<svg class="a" style="left:10px;top:437.5px" width="13" height="13" viewBox="0 0 13 13"><rect x=".5" y=".5" width="12" height="11.5" rx="1" fill="#f2f2f2" stroke="#888"/><rect x="1" y="1" width="11" height="1.5" fill="#999"/><path d="M3 4V10" stroke="#aaa" stroke-width=".8"/><path d="M5 7H8 V5.5 L10.5 7.3 L8 9 V7.8 H5z" fill="#f08a20"/></svg>
<div class="a" style="left:133px;top:55px;width:1px;height:504px;background:#c4c4c4"></div>
<div class="a" style="left:133px;top:54px;width:508px;height:505px;border:1px solid #bdbdbd;background:#f6f6f6"></div>
<div class="a" style="left:633px;top:55px;width:7px;height:503px;border-left:1px solid #c8c8c8;background:linear-gradient(90deg,#dcdcdc,#e6e6e6 40%,#e2e2e2)"></div>
<div class="a" style="left:633.5px;top:163px;width:6px;height:395px;border:1px solid #b5b5b5;border-radius:3px;background:linear-gradient(90deg,#e6e6e6,#efefef)"></div>
<div class="a" style="left:134px;top:55px;width:499px;height:503px;overflow:hidden">
<div class="a" style="left:5.3px;top:-25px;width:244.5px;height:86.3px;background:#cecece"></div>
<div class="a" style="left:7.7px;top:-25px;width:240.7px;height:84.2px;background:#f4f4f4"></div>
<div class="a" style="left:8.7px;top:-25px;width:238.5px;height:82.5px;background:#d6d6d6"></div>
<div class="a" style="left:210px;top:61px;width:39.8px;height:9.8px;background:#cecece;border-radius:0 0 2px 0"></div>
<div class="t" style="left:212px;top:62px;line-height:10px;font-size:6.9px;color:#3a3a3a;font-weight:normal;font-style:normal;">aboutdialog</div>
<div class="t" style="left:80.5px;top:-2px;line-height:10px;font-size:6.1px;color:#2e2e2e;font-weight:normal;font-style:normal;">Crimean astrophysical observatory</div>
<svg class="a" style="left:13px;top:21px" width="230" height="10" viewBox="0 0 230 10"><defs><pattern id="pk1" width="4.4" height="4.4" patternUnits="userSpaceOnUse"><rect width="4.4" height="4.4" fill="#d4d4d4"/><path d="M0 -1.8L1.8 0L0 1.8L-1.8 0z M4.4 -1.8L6.2 0L4.4 1.8L2.6 0z M0 2.6L1.8 4.4L0 6.2L-1.8 4.4z M4.4 2.6L6.2 4.4L4.4 6.2L2.6 4.4z M2.2 .4L4 2.2L2.2 4L.4 2.2z" fill="#c0c0c0"/></pattern></defs><rect width="230" height="10" fill="url(#pk1)"/></svg>
<div class="a" style="left:15.5px;top:36px;width:47px;height:14.5px;border:1px solid #a9a9a9;border-radius:2px;background:linear-gradient(#f4f4f4,#dcdcdc);box-shadow:0 1px 1px rgba(0,0,0,.15)"></div>
<div class="t" style="left:28.8px;top:39px;line-height:10px;font-size:6.6px;color:#333;font-weight:normal;font-style:normal;">Credits</div>
<div class="a" style="left:193.3px;top:36px;width:46px;height:14.5px;border:1px solid #a9a9a9;border-radius:2px;background:linear-gradient(#f4f4f4,#dcdcdc);box-shadow:0 1px 1px rgba(0,0,0,.15)"></div>
<div class="t" style="left:207.9px;top:39px;line-height:10px;font-size:6.4px;color:#333;font-weight:normal;font-style:normal;">Close</div>
<div class="a" style="left:5.3px;top:77px;width:289.8px;height:415.4px;background:#8fb171"></div>
<div class="a" style="left:7px;top:79px;width:286px;height:411px;background:#f2f4f0"></div>
<div class="a" style="left:7px;top:79px;width:284px;height:410.8px;background:#d6d6d6"></div>
<div class="a" style="left:249.8px;top:492px;width:45.3px;height:11px;background:#8fb171;border-radius:0 0 3px 3px"></div>
<div class="t" style="left:251.8px;top:494px;line-height:10px;font-size:6.75px;color:#d7e6ca;font-weight:normal;font-style:normal;">window_main</div>
<div class="a" style="left:13.5px;top:85.6px;width:73.8px;height:17.8px;border:1px solid #a9a9a9;border-radius:2px;background:linear-gradient(#f3f3f3,#dcdcdc);box-shadow:0 1px 1px rgba(0,0,0,.15)"></div>
<div class="a" style="left:13.5px;top:109px;width:73.8px;height:17.8px;border:1px solid #a9a9a9;border-radius:2px;background:linear-gradient(#f3f3f3,#dcdcdc);box-shadow:0 1px 1px rgba(0,0,0,.15)"></div>
<svg class="a" style="left:23.7px;top:88.6px" width="10.5" height="11" viewBox="0 0 10.5 11"><defs><linearGradient id="fg" x1="0" x2="1"><stop offset="0" stop-color="#888"/><stop offset=".45" stop-color="#222"/><stop offset="1" stop-color="#777"/></linearGradient></defs><rect x=".8" y=".3" width="3.5" height="1.8" fill="#222"/><rect x=".8" y="1.3" width="9" height="1.1" fill="#333"/><rect x=".2" y="2.6" width="9.8" height="8" rx="1.6" fill="url(#fg)"/><rect x="3.6" y="4.6" width="3.8" height="5.2" fill="#e4e4e4"/></svg>
<svg class="a" style="left:19px;top:112px" width="10.5" height="11" viewBox="0 0 10.5 11"><defs><linearGradient id="fg" x1="0" x2="1"><stop offset="0" stop-color="#888"/><stop offset=".45" stop-color="#222"/><stop offset="1" stop-color="#777"/></linearGradient></defs><rect x=".8" y=".3" width="3.5" height="1.8" fill="#222"/><rect x=".8" y="1.3" width="9" height="1.1" fill="#333"/><rect x=".2" y="2.6" width="9.8" height="8" rx="1.6" fill="url(#fg)"/><rect x="3.6" y="4.6" width="3.8" height="5.2" fill="#e4e4e4"/></svg>
<div class="t" style="left:36.9px;top:90px;line-height:10px;font-size:6.75px;color:#333;font-weight:normal;font-style:normal;">Raw directory</div>
<div class="t" style="left:33px;top:113px;line-height:10px;font-size:6.97px;color:#333;font-weight:normal;font-style:normal;">Output directory</div>
<div class="t" style="left:117.6px;top:88px;line-height:10px;font-size:6.5px;color:#333;font-weight:normal;font-style:normal;">Please, select directory</div>
<div class="t" style="left:117.6px;top:110px;line-height:10px;font-size:6.5px;color:#333;font-weight:normal;font-style:normal;">Please, select directory</div>
<svg class="a" style="left:250px;top:83px" width="30" height="30" viewBox="0 0 30 30"><defs><filter id="lb" x="-20%" y="-20%" width="140%" height="140%"><feGaussianBlur stdDeviation=".9"/></filter></defs><g filter="url(#lb)" transform="translate(15 15.5)"><path d="M0 0L-2 -13L6 -11z" fill="#8a2ee0"/><path d="M0 0L6 -11L11 -5z" fill="#5a40f0"/><path d="M0 0L11 -5L12 2z" fill="#30c8f0"/><path d="M0 0L12 2L9 9z" fill="#40d850"/><path d="M0 0L9 9L-1 12z" fill="#30d020"/><path d="M0 0L-1 12L-8 9z" fill="#90e020"/><path d="M0 0L-8 9L-11 4z" fill="#f08020"/><path d="M0 0L-11 4L-11 -5z" fill="#f01818"/><path d="M0 0L-11 -5L-2 -13z" fill="#e030c0"/><circle r="8.2" fill="#fff"/></g><g font-family="Liberation Sans" font-style="italic" fill="#111" text-anchor="middle"><text x="15" y="13.8" font-size="9.2" textLength="23" lengthAdjust="spacingAndGlyphs">RAW</text><text x="15" y="23" font-size="9.2" textLength="21" lengthAdjust="spacingAndGlyphs">FITS</text></g></svg>
<div class="t" style="left:255.4px;top:115px;line-height:10px;font-size:7px;color:#333;font-weight:normal;font-style:normal;">About</div>
<div class="a" style="left:12px;top:133px;width:277px;height:1px;background:#cbcbcb"></div>
<div class="a" style="left:12px;top:134px;width:277px;height:1px;background:#dedede"></div>
<div class="t" style="left:11.6px;top:139px;line-height:10px;font-size:8.8px;color:#2f2f2f;font-weight:bold;font-style:normal;">Fits header data</div>
<div class="t" style="left:12px;top:153px;line-height:10px;font-size:6.608px;color:#333;font-weight:normal;font-style:normal;">Leave fields blank to use values from the Raw file (if present in)</div>
<div class="t" style="left:15.8px;top:174px;line-height:10px;font-size:6.564px;color:#333;font-weight:normal;font-style:normal;">Object:</div>
<div class="t" style="left:15.8px;top:194px;line-height:10px;font-size:6.6px;color:#333;font-weight:normal;font-style:normal;transform:scaleX(0.9368);transform-origin:0 0;">Object RA:</div>
<div class="t" style="left:15.8px;top:215px;line-height:10px;font-size:6.996px;color:#333;font-weight:normal;font-style:normal;">Instrument:</div>
<div class="t" style="left:15.8px;top:237px;line-height:10px;font-size:6.96px;color:#333;font-weight:normal;font-style:normal;">Filter:</div>
<div class="t" style="left:15.8px;top:257px;line-height:10px;font-size:6.6px;color:#333;font-weight:normal;font-style:normal;transform:scaleX(0.9825);transform-origin:0 0;">Exposure:</div>
<div class="t" style="left:15.8px;top:278px;line-height:10px;font-size:6.806px;color:#333;font-weight:normal;font-style:normal;">Temperature:</div>
<div class="t" style="left:154.4px;top:174px;line-height:10px;font-size:6.6px;color:#333;font-weight:normal;font-style:normal;transform:scaleX(0.9602);transform-origin:0 0;">Telescope:</div>
<div class="t" style="left:154.4px;top:194px;line-height:10px;font-size:6.6px;color:#333;font-weight:normal;font-style:normal;transform:scaleX(0.9323);transform-origin:0 0;">Object DEC:</div>
<div class="t" style="left:154.4px;top:215px;line-height:10px;font-size:6.582px;color:#333;font-weight:normal;font-style:normal;">Observer:</div>
<div class="t" style="left:154.4px;top:237px;line-height:10px;font-size:6.6px;color:#333;font-weight:normal;font-style:normal;transform:scaleX(0.9317);transform-origin:0 0;">Date:</div>
<div class="t" style="left:154.4px;top:257px;line-height:10px;font-size:6.504px;color:#333;font-weight:normal;font-style:normal;">Notes:</div>
<div class="a" style="left:61px;top:169.8px;width:88px;height:21.2px;border:1px solid #a6c292;background:#d6dbd1"></div>
<div class="a" style="left:62px;top:170.6px;width:86px;height:15.4px;border:1px solid #b4c4a6;border-radius:2px;background:linear-gradient(90deg,#dbe5d2,#e9efe3 50%,#dbe5d2)"></div>
<div class="a" style="left:62px;top:186px;width:86px;height:4.8px;background:#d5dad0"></div>
<div class="a" style="left:192.2px;top:170.8px;width:83.8px;height:15px;border:1px solid #adadad;border-radius:2px;background:linear-gradient(#e3e3e3,#f1f1f1 50%,#f4f4f4);box-shadow:0 .5px 0 #e8e8e8"></div>
<div class="a" style="left:62.4px;top:212.3px;width:85.2px;height:15.199999999999989px;border:1px solid #adadad;border-radius:2px;background:linear-gradient(#e3e3e3,#f1f1f1 50%,#f4f4f4);box-shadow:0 .5px 0 #e8e8e8"></div>
<div class="a" style="left:192.2px;top:212.3px;width:83.8px;height:15.199999999999989px;border:1px solid #adadad;border-radius:2px;background:linear-gradient(#e3e3e3,#f1f1f1 50%,#f4f4f4);box-shadow:0 .5px 0 #e8e8e8"></div>
<div class="a" style="left:62.4px;top:233.7px;width:85.2px;height:14.400000000000034px;border:1px solid #adadad;border-radius:2px;background:linear-gradient(#e3e3e3,#f1f1f1 50%,#f4f4f4);box-shadow:0 .5px 0 #e8e8e8"></div>
<div class="a" style="left:192.2px;top:233.7px;width:83.8px;height:14.400000000000034px;border:1px solid #adadad;border-radius:2px;background:linear-gradient(#e3e3e3,#f1f1f1 50%,#f4f4f4);box-shadow:0 .5px 0 #e8e8e8"></div>
<div class="a" style="left:62.4px;top:254.6px;width:85.2px;height:14.199999999999989px;border:1px solid #adadad;border-radius:2px;background:linear-gradient(#e3e3e3,#f1f1f1 50%,#f4f4f4);box-shadow:0 .5px 0 #e8e8e8"></div>
<div class="a" style="left:192.2px;top:254.6px;width:83.8px;height:14.199999999999989px;border:1px solid #adadad;border-radius:2px;background:linear-gradient(#e3e3e3,#f1f1f1 50%,#f4f4f4);box-shadow:0 .5px 0 #e8e8e8"></div>
<div class="a" style="left:62.4px;top:275.3px;width:83.6px;height:14px;border:1px solid #adadad;border-radius:2px;background:linear-gradient(#e3e3e3,#f1f1f1 50%,#f4f4f4);box-shadow:0 .5px 0 #e8e8e8"></div>
<div class="t" style="left:66px;top:278px;line-height:10px;font-size:6.6px;color:#333;font-weight:normal;font-style:normal;">0.0</div>
<div class="a" style="left:62.4px;top:192px;width:15.900000000000006px;height:14.5px;border:1px solid #adadad;border-radius:2px;background:linear-gradient(#e3e3e3,#f1f1f1 50%,#f4f4f4);box-shadow:0 .5px 0 #e8e8e8"></div>
<div class="t" style="left:64.7px;top:195px;line-height:10px;font-size:6.8px;color:#333;font-weight:normal;font-style:normal;">00</div>
<div class="a" style="left:87.2px;top:192px;width:13.5px;height:14.5px;border:1px solid #adadad;border-radius:2px;background:linear-gradient(#e3e3e3,#f1f1f1 50%,#f4f4f4);box-shadow:0 .5px 0 #e8e8e8"></div>
<div class="t" style="left:89.5px;top:195px;line-height:10px;font-size:6.8px;color:#333;font-weight:normal;font-style:normal;">00</div>
<div class="a" style="left:109.3px;top:192px;width:13.0px;height:14.5px;border:1px solid #adadad;border-radius:2px;background:linear-gradient(#e3e3e3,#f1f1f1 50%,#f4f4f4);box-shadow:0 .5px 0 #e8e8e8"></div>
<div class="t" style="left:111.6px;top:195px;line-height:10px;font-size:6.8px;color:#333;font-weight:normal;font-style:normal;">00</div>
<div class="a" style="left:131.4px;top:192px;width:16.200000000000045px;height:14.5px;border:1px solid #adadad;border-radius:2px;background:linear-gradient(#e3e3e3,#f1f1f1 50%,#f4f4f4);box-shadow:0 .5px 0 #e8e8e8"></div>
<div class="t" style="left:133.7px;top:195px;line-height:10px;font-size:6.8px;color:#333;font-weight:normal;font-style:normal;">000</div>
<div class="t" style="left:81.8px;top:195px;line-height:10px;font-size:6px;color:#666;font-weight:normal;font-style:normal;">:</div>
<div class="t" style="left:104.2px;top:195px;line-height:10px;font-size:6px;color:#666;font-weight:normal;font-style:normal;">:</div>
<div class="t" style="left:125.8px;top:196px;line-height:10px;font-size:6px;color:#666;font-weight:normal;font-style:normal;">.</div>
<div class="a" style="left:192.2px;top:192px;width:16.19999999999999px;height:14.5px;border:1px solid #adadad;border-radius:2px;background:linear-gradient(#e3e3e3,#f1f1f1 50%,#f4f4f4);box-shadow:0 .5px 0 #e8e8e8"></div>
<div class="t" style="left:194.5px;top:195px;line-height:10px;font-size:6.8px;color:#333;font-weight:normal;font-style:normal;">00</div>
<div class="a" style="left:217.5px;top:192px;width:13.0px;height:14.5px;border:1px solid #adadad;border-radius:2px;background:linear-gradient(#e3e3e3,#f1f1f1 50%,#f4f4f4);box-shadow:0 .5px 0 #e8e8e8"></div>
<div class="t" style="left:219.8px;top:195px;line-height:10px;font-size:6.8px;color:#333;font-weight:normal;font-style:normal;">00</div>
<div class="a" style="left:239.2px;top:192px;width:13.400000000000034px;height:14.5px;border:1px solid #adadad;border-radius:2px;background:linear-gradient(#e3e3e3,#f1f1f1 50%,#f4f4f4);box-shadow:0 .5px 0 #e8e8e8"></div>
<div class="t" style="left:241.5px;top:195px;line-height:10px;font-size:6.8px;color:#333;font-weight:normal;font-style:normal;">00</div>
<div class="a" style="left:261.3px;top:192px;width:16.19999999999999px;height:14.5px;border:1px solid #adadad;border-radius:2px;background:linear-gradient(#e3e3e3,#f1f1f1 50%,#f4f4f4);box-shadow:0 .5px 0 #e8e8e8"></div>
<div class="t" style="left:263.6px;top:195px;line-height:10px;font-size:6.8px;color:#333;font-weight:normal;font-style:normal;">000</div>
<div class="t" style="left:211.9px;top:195px;line-height:10px;font-size:6px;color:#666;font-weight:normal;font-style:normal;">:</div>
<div class="t" style="left:234.0px;top:195px;line-height:10px;font-size:6px;color:#666;font-weight:normal;font-style:normal;">:</div>
<div class="t" style="left:256.1px;top:196px;line-height:10px;font-size:6px;color:#666;font-weight:normal;font-style:normal;">.</div>
<div class="a" style="left:148px;top:274px;width:143px;height:1px;background:#e2e2e2"></div>
<div class="a" style="left:148px;top:274px;width:1px;height:21px;background:#e2e2e2"></div>
<svg class="a" style="left:149px;top:275px" width="141.5" height="20" viewBox="0 0 141.5 20"><defs><pattern id="pk2" width="4.4" height="4.4" patternUnits="userSpaceOnUse"><rect width="4.4" height="4.4" fill="#d4d4d4"/><path d="M0 -1.8L1.8 0L0 1.8L-1.8 0z M4.4 -1.8L6.2 0L4.4 1.8L2.6 0z M0 2.6L1.8 4.4L0 6.2L-1.8 4.4z M4.4 2.6L6.2 4.4L4.4 6.2L2.6 4.4z M2.2 .4L4 2.2L2.2 4L.4 2.2z" fill="#c0c0c0"/></pattern></defs><rect width="141.5" height="20" fill="url(#pk2)"/></svg>
<div class="a" style="left:190.5px;top:275px;width:0.8px;height:20px;background:#c2c2c2"></div>
<div class="a" style="left:8px;top:296px;width:282px;height:1px;background:#dedede"></div>
<div class="t" style="left:11.8px;top:302px;line-height:10px;font-size:8.5px;color:#2f2f2f;font-weight:bold;font-style:normal;">Image &amp; color processing</div>
<div class="t" style="left:14.7px;top:322px;line-height:10px;font-size:6.5px;color:#333;font-weight:normal;font-style:normal;">Color channels</div>
<div class="a" style="left:65.2px;top:320.7px;width:16.2px;height:11.6px;border:1px solid #a9a9a9;border-radius:2px;background:linear-gradient(#f3f3f3,#dcdcdc);box-shadow:0 1px 1px rgba(0,0,0,.15)"></div>
<svg class="a" style="left:70.5px;top:324.8px" width="6" height="4" viewBox="0 0 6 4"><path d="M.3 .3h5l-2.5 3z" fill="#222"/></svg>
<div class="a" style="left:15.8px;top:345.2px;width:8px;height:8px;border:1px solid #a9a9a9;border-radius:1.5px;background:linear-gradient(#eeeeee,#fafafa)"></div>
<div class="t" style="left:28px;top:345px;line-height:10px;font-size:6.98px;color:#333;font-weight:normal;font-style:normal;">Apply auto bright</div>
<div class="a" style="left:96.7px;top:345.2px;width:8px;height:8px;border:1px solid #7a9462;border-radius:1.5px;background:#97b779"></div>
<svg class="a" style="left:98.7px;top:347.2px" width="4" height="4" viewBox="0 0 4 4"><path d="M.6 .6L3.4 3.4M3.4 .6L.6 3.4" stroke="#f6f9f3" stroke-width="1.15"/></svg>
<div class="t" style="left:109px;top:345px;line-height:10px;font-size:6.7px;color:#333;font-weight:normal;font-style:normal;">Apply interpolation</div>
<div class="a" style="left:182.8px;top:345.2px;width:8px;height:8px;border:1px solid #7a9462;border-radius:1.5px;background:#97b779"></div>
<svg class="a" style="left:184.8px;top:347.2px" width="4" height="4" viewBox="0 0 4 4"><path d="M.6 .6L3.4 3.4M3.4 .6L.6 3.4" stroke="#f6f9f3" stroke-width="1.15"/></svg>
<div class="t" style="left:195px;top:345px;line-height:10px;font-size:6.7px;color:#333;font-weight:normal;font-style:normal;">Apply autoscale</div>
<div class="a" style="left:12px;top:361.5px;width:277px;height:1px;background:#cbcbcb"></div>
<div class="a" style="left:12px;top:362.5px;width:277px;height:1px;background:#dedede"></div>
<div class="t" style="left:11.8px;top:367px;line-height:10px;font-size:8.8px;color:#2f2f2f;font-weight:bold;font-style:normal;">Output properties</div>
<div class="t" style="left:14.7px;top:387px;line-height:10px;font-size:6.5px;color:#333;font-weight:normal;font-style:normal;">File naming</div>
<div class="a" style="left:55.9px;top:386.3px;width:15.9px;height:11.3px;border:1px solid #a9a9a9;border-radius:2px;background:linear-gradient(#f3f3f3,#dcdcdc);box-shadow:0 1px 1px rgba(0,0,0,.15)"></div>
<svg class="a" style="left:61px;top:390.2px" width="6" height="4" viewBox="0 0 6 4"><path d="M.3 .3h5l-2.5 3z" fill="#222"/></svg>
<div class="a" style="left:80px;top:388px;width:8px;height:8px;border:1px solid #a9a9a9;border-radius:1.5px;background:linear-gradient(#eeeeee,#fafafa)"></div>
<div class="t" style="left:92.4px;top:387px;line-height:10px;font-size:6.86px;color:#333;font-weight:normal;font-style:normal;">Overwrite existing</div>
<div class="a" style="left:9.2px;top:403.5px;width:281px;height:56.5px;border:1px solid #b4b4b4;background:#d2d2d2"></div>
<div class="a" style="left:10.2px;top:404.5px;width:279px;height:54.5px;background:linear-gradient(90deg,#c9c9c9,#dcdcdc 4px,#dcdcdc)"></div>
<div class="a" style="left:14.4px;top:406px;width:263.6px;height:51px;background:#f6f6f6"></div>
<div class="a" style="left:278px;top:404.5px;width:11.5px;height:54.5px;background:linear-gradient(90deg,#d4d4d4,#dedede)"></div>
<div class="a" style="left:283px;top:405.4px;width:6.2px;height:52.2px;border:1px solid #aeaeae;border-radius:3px;background:linear-gradient(90deg,#e4e4e4,#f0f0f0)"></div>
<div class="a" style="left:14px;top:466px;width:37px;height:18.8px;border:1px solid #a9a9a9;border-radius:2px;background:linear-gradient(#f3f3f3,#dcdcdc);box-shadow:0 1px 1px rgba(0,0,0,.15)"></div>
<svg class="a" style="left:20.5px;top:471px" width="7.5" height="7.5" viewBox="0 0 7.5 7.5"><path d="M.3 .3 L7.2 3.7 L.3 7.2z" fill="#2a2a2a"/></svg>
<div class="t" style="left:32.7px;top:472px;line-height:10px;font-size:6.63px;color:#333;font-weight:normal;font-style:normal;">Start</div>
<div class="a" style="left:59.5px;top:466px;width:36.4px;height:18.8px;border:1px solid #a9a9a9;border-radius:2px;background:linear-gradient(#f3f3f3,#dcdcdc);box-shadow:0 1px 1px rgba(0,0,0,.15)"></div>
<div class="a" style="left:66px;top:471.8px;width:7.2px;height:7px;background:linear-gradient(#333,#555)"></div>
<div class="t" style="left:78px;top:472px;line-height:10px;font-size:6.8px;color:#333;font-weight:normal;font-style:normal;">Stop</div>
<div class="a" style="left:103.5px;top:466.5px;width:183px;height:13px;border:1px solid #b0b0b0;border-radius:2px;background:linear-gradient(#e2e2e2,#f2f2f2)"></div>
<div class="t" style="left:190px;top:469px;line-height:10px;font-size:6.3px;color:#333;font-weight:normal;font-style:normal;">0 %</div>
</div>
<div class="a" style="left:644px;top:56.2px;width:400px;height:15px;border:1px solid #b3b3b3;border-right:none;border-radius:3px 0 0 3px;background:linear-gradient(#f4f4f4,#ebebeb);box-shadow:inset 0 1px 1px rgba(0,0,0,.06)"></div>
<div class="t" style="left:649.6px;top:60px;line-height:10px;font-size:6.8px;color:#9c9c9c;font-weight:normal;font-style:normal;transform:scaleX(0.9192);transform-origin:0 0;">&lt; Search Widgets &gt;</div>
<div class="a" style="left:644px;top:72.8px;width:400px;height:238.2px;border-top:1px solid #b0b0b0;border-left:1px solid #c0c0c0;background:#f6f6f6"></div>
<div class="a" style="left:645px;top:73px;width:393px;height:238px;overflow:hidden">
<svg class="a" style="left:23.7px;top:0.4px" width="4" height="5" viewBox="0 0 4 5"><path d="M.2 .2L3.6 2.5L.2 4.8z" fill="#111"/></svg>
<svg class="a" style="left:35.0px;top:-0.4px" width="8.5" height="8" viewBox="0 0 8.5 8"><rect x=".5" y=".5" width="7.5" height="7" fill="#fafafa" stroke="#666" stroke-width=".7"/><path d="M.5 3.5H8" stroke="#777" stroke-width=".6"/></svg>
<div class="t" style="left:46.7px;top:-2px;line-height:10px;font-size:6.7px;color:#333;font-weight:normal;font-style:normal;transform:scaleX(1.0048);transform-origin:0 0;">box2</div>
<div class="t" style="left:70.6px;top:-2px;line-height:10px;font-size:6.8px;color:#979797;font-weight:normal;font-style:italic;transform:scaleX(0.8968);transform-origin:0 0;">GtkBox</div>
<svg class="a" style="left:23.7px;top:13.4px" width="4" height="5" viewBox="0 0 4 5"><path d="M.2 .2L3.6 2.5L.2 4.8z" fill="#111"/></svg>
<svg class="a" style="left:35.0px;top:11px" width="8.5" height="9.5" viewBox="0 0 8.5 9.5"><rect x=".5" y=".5" width="7.5" height="8.5" fill="#fafafa" stroke="#666" stroke-width=".7"/><path d="M.5 3H8M.5 5.6H8" stroke="#777" stroke-width=".6"/></svg>
<div class="t" style="left:46.7px;top:11px;line-height:10px;font-size:6.7px;color:#333;font-weight:normal;font-style:normal;transform:scaleX(1.0048);transform-origin:0 0;">box3</div>
<div class="t" style="left:70.6px;top:11px;line-height:10px;font-size:6.8px;color:#979797;font-weight:normal;font-style:italic;transform:scaleX(0.8968);transform-origin:0 0;">GtkBox</div>
<svg class="a" style="left:34.2px;top:26.4px" width="9" height="5" viewBox="0 0 9 5"><rect x=".5" y=".5" width="8" height="4" rx=".6" fill="#f6f6f6" stroke="#444" stroke-width=".8"/><path d="M3 2.6H6" stroke="#222" stroke-width="1"/></svg>
<div class="t" style="left:46.7px;top:24px;line-height:10px;font-size:6.7px;color:#333;font-weight:normal;font-style:normal;transform:scaleX(1.0327);transform-origin:0 0;">button_about</div>
<div class="t" style="left:96.4px;top:24px;line-height:10px;font-size:6.8px;color:#979797;font-weight:normal;font-style:italic;transform:scaleX(0.9094);transform-origin:0 0;">GtkButton</div>
<div class="a" style="left:31.2px;top:36.4px;width:0.9px;height:7.4px;background:#666"></div>
<div class="t" style="left:39.7px;top:37px;line-height:10px;font-size:6.7px;color:#333;font-weight:normal;font-style:normal;transform:scaleX(1.0083);transform-origin:0 0;">separator1</div>
<div class="t" style="left:81.3px;top:37px;line-height:10px;font-size:6.8px;color:#979797;font-weight:normal;font-style:italic;transform:scaleX(0.8900);transform-origin:0 0;">GtkSeparator</div>
<svg class="a" style="left:26.9px;top:52px" width="10" height="5" viewBox="0 0 10 5"><text x="0" y="3.8" font-size="4.3" font-weight="bold" font-family="Liberation Sans" fill="#000" stroke="#000" stroke-width=".12" textLength="9.3" lengthAdjust="spacingAndGlyphs">label</text></svg>
<div class="t" style="left:39.7px;top:50px;line-height:10px;font-size:6.7px;color:#333;font-weight:normal;font-style:normal;transform:scaleX(0.9306);transform-origin:0 0;">label1</div>
<div class="t" style="left:65.65px;top:50px;line-height:10px;font-size:6.8px;color:#979797;font-weight:normal;font-style:italic;transform:scaleX(0.8486);transform-origin:0 0;">GtkLabel</div>
<svg class="a" style="left:26.9px;top:65px" width="10" height="5" viewBox="0 0 10 5"><text x="0" y="3.8" font-size="4.3" font-weight="bold" font-family="Liberation Sans" fill="#000" stroke="#000" stroke-width=".12" textLength="9.3" lengthAdjust="spacingAndGlyphs">label</text></svg>
<div class="t" style="left:39.7px;top:63px;line-height:10px;font-size:6.7px;color:#333;font-weight:normal;font-style:normal;transform:scaleX(0.9558);transform-origin:0 0;">label2</div>
<div class="t" style="left:66.1px;top:63px;line-height:10px;font-size:6.8px;color:#979797;font-weight:normal;font-style:italic;transform:scaleX(0.8486);transform-origin:0 0;">GtkLabel</div>
<svg class="a" style="left:15.7px;top:78.6px" width="5.5" height="3.5" viewBox="0 0 5.5 3.5"><path d="M.2 .2H5.3L2.75 3.2z" fill="#111"/></svg>
<svg class="a" style="left:27.0px;top:76px" width="9" height="9.5" viewBox="0 0 9 9.5"><rect x=".5" y=".5" width="8" height="8.5" fill="#fafafa" stroke="#555" stroke-width=".8"/><path d="M3.2 .5V9M5.8 .5V9M.5 3.3H8.5M.5 6.2H8.5" stroke="#555" stroke-width=".6"/></svg>
<div class="t" style="left:39.7px;top:76px;line-height:10px;font-size:6.7px;color:#333;font-weight:normal;font-style:normal;transform:scaleX(1.0800);transform-origin:0 0;">grid2</div>
<div class="t" style="left:65.1px;top:76px;line-height:10px;font-size:6.8px;color:#979797;font-weight:normal;font-style:italic;transform:scaleX(0.8750);transform-origin:0 0;">GtkGrid</div>
<svg class="a" style="left:33.9px;top:91px" width="10" height="5" viewBox="0 0 10 5"><text x="0" y="3.8" font-size="4.3" font-weight="bold" font-family="Liberation Sans" fill="#000" stroke="#000" stroke-width=".12" textLength="9.3" lengthAdjust="spacingAndGlyphs">label</text></svg>
<div class="t" style="left:46.7px;top:89px;line-height:10px;font-size:6.7px;color:#333;font-weight:normal;font-style:normal;transform:scaleX(0.9670);transform-origin:0 0;">label3</div>
<div class="t" style="left:73.3px;top:89px;line-height:10px;font-size:6.8px;color:#979797;font-weight:normal;font-style:italic;transform:scaleX(0.8486);transform-origin:0 0;">GtkLabel</div>
<svg class="a" style="left:33.9px;top:104px" width="10" height="5" viewBox="0 0 10 5"><text x="0" y="3.8" font-size="4.3" font-weight="bold" font-family="Liberation Sans" fill="#000" stroke="#000" stroke-width=".12" textLength="9.3" lengthAdjust="spacingAndGlyphs">label</text></svg>
<div class="t" style="left:46.7px;top:102px;line-height:10px;font-size:6.7px;color:#333;font-weight:normal;font-style:normal;transform:scaleX(0.9670);transform-origin:0 0;">label4</div>
<div class="t" style="left:73.3px;top:102px;line-height:10px;font-size:6.8px;color:#979797;font-weight:normal;font-style:italic;transform:scaleX(0.8486);transform-origin:0 0;">GtkLabel</div>
<div class="a" style="left:-1px;top:113px;width:400px;height:12.4px;background:linear-gradient(#9dba7e,#8cad6c)"></div>
<svg class="a" style="left:33.7px;top:116.7px" width="10.5" height="5.5" viewBox="0 0 10.5 5.5"><rect x=".5" y=".5" width="9.5" height="4.5" rx="1.2" fill="#fdfdfd" stroke="#e8efe2" stroke-width=".8"/><path d="M2 1.6V3.9" stroke="#333" stroke-width=".6"/></svg>
<div class="t" style="left:46.7px;top:115px;line-height:10px;font-size:6.7px;color:#eef4e8;font-weight:normal;font-style:normal;transform:scaleX(1.0026);transform-origin:0 0;">entry_object</div>
<div class="t" style="left:92.6px;top:115px;line-height:10px;font-size:6.8px;color:#e6eedf;font-weight:normal;font-style:italic;transform:scaleX(0.8883);transform-origin:0 0;">GtkEntry</div>
<svg class="a" style="left:33.7px;top:129.7px" width="10.5" height="5.5" viewBox="0 0 10.5 5.5"><rect x=".5" y=".5" width="9.5" height="4.5" rx="1.2" fill="#fdfdfd" stroke="#555" stroke-width=".8"/><path d="M2 1.6V3.9" stroke="#333" stroke-width=".6"/></svg>
<div class="t" style="left:46.7px;top:128px;line-height:10px;font-size:6.7px;color:#333;font-weight:normal;font-style:normal;transform:scaleX(0.9787);transform-origin:0 0;">entry_telescope</div>
<div class="t" style="left:102.3px;top:128px;line-height:10px;font-size:6.8px;color:#979797;font-weight:normal;font-style:italic;transform:scaleX(0.8883);transform-origin:0 0;">GtkEntry</div>
<svg class="a" style="left:33.9px;top:143px" width="10" height="5" viewBox="0 0 10 5"><text x="0" y="3.8" font-size="4.3" font-weight="bold" font-family="Liberation Sans" fill="#000" stroke="#000" stroke-width=".12" textLength="9.3" lengthAdjust="spacingAndGlyphs">label</text></svg>
<div class="t" style="left:46.7px;top:141px;line-height:10px;font-size:6.7px;color:#333;font-weight:normal;font-style:normal;transform:scaleX(0.9670);transform-origin:0 0;">label5</div>
<div class="t" style="left:73.3px;top:141px;line-height:10px;font-size:6.8px;color:#979797;font-weight:normal;font-style:italic;transform:scaleX(0.8486);transform-origin:0 0;">GtkLabel</div>
<svg class="a" style="left:33.9px;top:156px" width="10" height="5" viewBox="0 0 10 5"><text x="0" y="3.8" font-size="4.3" font-weight="bold" font-family="Liberation Sans" fill="#000" stroke="#000" stroke-width=".12" textLength="9.3" lengthAdjust="spacingAndGlyphs">label</text></svg>
<div class="t" style="left:46.7px;top:154px;line-height:10px;font-size:6.7px;color:#333;font-weight:normal;font-style:normal;transform:scaleX(0.9670);transform-origin:0 0;">label6</div>
<div class="t" style="left:73.3px;top:154px;line-height:10px;font-size:6.8px;color:#979797;font-weight:normal;font-style:italic;transform:scaleX(0.8486);transform-origin:0 0;">GtkLabel</div>
<svg class="a" style="left:33.7px;top:168.7px" width="10.5" height="5.5" viewBox="0 0 10.5 5.5"><rect x=".5" y=".5" width="9.5" height="4.5" rx="1.2" fill="#fdfdfd" stroke="#555" stroke-width=".8"/><path d="M2 1.6V3.9" stroke="#333" stroke-width=".6"/></svg>
<div class="t" style="left:46.7px;top:167px;line-height:10px;font-size:6.7px;color:#333;font-weight:normal;font-style:normal;transform:scaleX(1.0240);transform-origin:0 0;">entry_instrument</div>
<div class="t" style="left:107.1px;top:167px;line-height:10px;font-size:6.8px;color:#979797;font-weight:normal;font-style:italic;transform:scaleX(0.8883);transform-origin:0 0;">GtkEntry</div>
<svg class="a" style="left:33.7px;top:181.7px" width="10.5" height="5.5" viewBox="0 0 10.5 5.5"><rect x=".5" y=".5" width="9.5" height="4.5" rx="1.2" fill="#fdfdfd" stroke="#555" stroke-width=".8"/><path d="M2 1.6V3.9" stroke="#333" stroke-width=".6"/></svg>
<div class="t" style="left:46.7px;top:180px;line-height:10px;font-size:6.7px;color:#333;font-weight:normal;font-style:normal;transform:scaleX(1.0091);transform-origin:0 0;">entry_observer</div>
<div class="t" style="left:101.1px;top:180px;line-height:10px;font-size:6.8px;color:#979797;font-weight:normal;font-style:italic;transform:scaleX(0.8883);transform-origin:0 0;">GtkEntry</div>
<svg class="a" style="left:33.9px;top:195px" width="10" height="5" viewBox="0 0 10 5"><text x="0" y="3.8" font-size="4.3" font-weight="bold" font-family="Liberation Sans" fill="#000" stroke="#000" stroke-width=".12" textLength="9.3" lengthAdjust="spacingAndGlyphs">label</text></svg>
<div class="t" style="left:46.7px;top:193px;line-height:10px;font-size:6.7px;color:#333;font-weight:normal;font-style:normal;transform:scaleX(0.9558);transform-origin:0 0;">label7</div>
<div class="t" style="left:73.1px;top:193px;line-height:10px;font-size:6.8px;color:#979797;font-weight:normal;font-style:italic;transform:scaleX(0.8486);transform-origin:0 0;">GtkLabel</div>
<svg class="a" style="left:33.7px;top:207.7px" width="10.5" height="5.5" viewBox="0 0 10.5 5.5"><rect x=".5" y=".5" width="9.5" height="4.5" rx="1.2" fill="#fdfdfd" stroke="#555" stroke-width=".8"/><path d="M2 1.6V3.9" stroke="#333" stroke-width=".6"/></svg>
<div class="t" style="left:46.7px;top:206px;line-height:10px;font-size:6.7px;color:#333;font-weight:normal;font-style:normal;transform:scaleX(1.0422);transform-origin:0 0;">entry_filter</div>
<div class="t" style="left:88.6px;top:206px;line-height:10px;font-size:6.8px;color:#979797;font-weight:normal;font-style:italic;transform:scaleX(0.8883);transform-origin:0 0;">GtkEntry</div>
<svg class="a" style="left:33.9px;top:221px" width="10" height="5" viewBox="0 0 10 5"><text x="0" y="3.8" font-size="4.3" font-weight="bold" font-family="Liberation Sans" fill="#000" stroke="#000" stroke-width=".12" textLength="9.3" lengthAdjust="spacingAndGlyphs">label</text></svg>
<div class="t" style="left:46.7px;top:219px;line-height:10px;font-size:6.7px;color:#333;font-weight:normal;font-style:normal;transform:scaleX(0.9670);transform-origin:0 0;">label8</div>
<div class="t" style="left:73.3px;top:219px;line-height:10px;font-size:6.8px;color:#979797;font-weight:normal;font-style:italic;transform:scaleX(0.8486);transform-origin:0 0;">GtkLabel</div>
<svg class="a" style="left:33.7px;top:233.7px" width="10.5" height="5.5" viewBox="0 0 10.5 5.5"><rect x=".5" y=".5" width="9.5" height="4.5" rx="1.2" fill="#fdfdfd" stroke="#555" stroke-width=".8"/><path d="M2 1.6V3.9" stroke="#333" stroke-width=".6"/></svg>
<div class="t" style="left:46.7px;top:232px;line-height:10px;font-size:6.7px;color:#333;font-weight:normal;font-style:normal;transform:scaleX(1.0052);transform-origin:0 0;">entry_notes</div>
<div class="t" style="left:91.2px;top:232px;line-height:10px;font-size:6.8px;color:#979797;font-weight:normal;font-style:italic;transform:scaleX(0.8883);transform-origin:0 0;">GtkEntry</div>
</div>
<div class="a" style="left:644px;top:311px;width:400px;height:1px;background:#bcbcbc"></div>
<div class="a" style="left:642px;top:300.0px;width:1px;height:1.2px;background:#9a9a9a"></div>
<div class="a" style="left:642px;top:302.6px;width:1px;height:1.2px;background:#9a9a9a"></div>
<div class="a" style="left:642px;top:305.2px;width:1px;height:1.2px;background:#9a9a9a"></div>
<div class="a" style="left:642px;top:307.8px;width:1px;height:1.2px;background:#9a9a9a"></div>
<div class="a" style="left:642px;top:310.4px;width:1px;height:1.2px;background:#9a9a9a"></div>
<div class="a" style="left:845.0px;top:311.5px;width:1.2px;height:1px;background:#9a9a9a"></div>
<div class="a" style="left:848.2px;top:311.5px;width:1.2px;height:1px;background:#9a9a9a"></div>
<div class="a" style="left:851.4px;top:311.5px;width:1.2px;height:1px;background:#9a9a9a"></div>
<div class="a" style="left:854.6px;top:311.5px;width:1.2px;height:1px;background:#9a9a9a"></div>
<div class="a" style="left:857.8px;top:311.5px;width:1.2px;height:1px;background:#9a9a9a"></div>
<svg class="a" style="left:644px;top:317px" width="13" height="7" viewBox="0 0 13 7"><rect x=".5" y=".5" width="12" height="6" rx="1.5" fill="#fdfdfd" stroke="#999" stroke-width=".8"/></svg>
<div class="t" style="left:658.8px;top:316px;line-height:10px;font-size:6.691px;color:#383838;font-weight:normal;font-style:normal;">Text Entry Properties - GtkEntry [entry_object]</div>
<div class="a" style="left:644.6px;top:328.5px;width:27.0px;height:14.5px;border:1px solid #b9b9b9;border-bottom:none;border-radius:2px 2px 0 0;background:linear-gradient(#dcdcdc,#d0d0d0)"></div>
<div class="t" style="left:646.9px;top:331px;line-height:10px;font-size:6.7px;color:#3a3a3a;font-weight:normal;font-style:normal;transform:scaleX(0.9523);transform-origin:0 0;">General</div>
<div class="a" style="left:673.6px;top:328.5px;width:26.5px;height:14.5px;border:1px solid #b9b9b9;border-bottom:none;border-radius:2px 2px 0 0;background:linear-gradient(#dcdcdc,#d0d0d0)"></div>
<div class="t" style="left:675.7px;top:331px;line-height:10px;font-size:6.7px;color:#3a3a3a;font-weight:normal;font-style:normal;transform:scaleX(0.9439);transform-origin:0 0;">Packing</div>
<div class="a" style="left:734.8px;top:328.5px;width:24.600000000000023px;height:14.5px;border:1px solid #b9b9b9;border-bottom:none;border-radius:2px 2px 0 0;background:linear-gradient(#dcdcdc,#d0d0d0)"></div>
<div class="t" style="left:736.8px;top:331px;line-height:10px;font-size:6.7px;color:#3a3a3a;font-weight:normal;font-style:normal;transform:scaleX(0.9598);transform-origin:0 0;">Signals</div>
<div class="a" style="left:761.3px;top:328.5px;width:13.2px;height:14.5px;border:1px solid #b9b9b9;border-bottom:none;border-radius:2px 2px 0 0;background:linear-gradient(#dcdcdc,#d0d0d0)"></div>
<svg class="a" style="left:762.5px;top:330.5px" width="11" height="11" viewBox="0 0 11 11"><circle cx="5.5" cy="5.5" r="5.2" fill="#3d7bd4"/><circle cx="5.5" cy="5.5" r="4.3" fill="none" stroke="#dfe9f7" stroke-width=".5"/><circle cx="5.5" cy="2.8" r=".85" fill="#fff"/><path d="M3.2 4.2L5.5 4.7L7.8 4.2M5.5 4.7V6.2L4.3 8.4M5.5 6.2L6.7 8.4" stroke="#fff" stroke-width="1" fill="none" stroke-linecap="round"/></svg>
<div class="a" style="left:644px;top:342.8px;width:400px;height:215px;border:1px solid #b5b5b5;border-right:none;background:#ececec"></div>
<div class="a" style="left:702.4px;top:327.4px;width:30.8px;height:16.4px;border:1px solid #b9b9b9;border-bottom:none;border-radius:2px 2px 0 0;background:#ececec"></div>
<div class="t" style="left:704.4px;top:330px;line-height:10px;font-size:6.7px;color:#3a3a3a;font-weight:normal;font-style:normal;transform:scaleX(0.9747);transform-origin:0 0;">Common</div>
<div class="a" style="left:656.2px;top:348px;width:8px;height:8px;border:1px solid #7a9462;border-radius:1.5px;background:#97b779"></div>
<svg class="a" style="left:658.2px;top:350px" width="4" height="4" viewBox="0 0 4 4"><path d="M.6 .6L3.4 3.4M3.4 .6L.6 3.4" stroke="#f6f9f3" stroke-width="1.15"/></svg>
<div class="t" style="left:669px;top:347px;line-height:10px;font-size:6.7px;color:#333;font-weight:normal;font-style:italic;transform:scaleX(0.8618);transform-origin:0 0;">Can focus</div>
<div class="a" style="left:656.2px;top:365px;width:8px;height:8px;border:1px solid #a9a9a9;border-radius:1.5px;background:linear-gradient(#eeeeee,#fafafa)"></div>
<div class="t" style="left:669px;top:364px;line-height:10px;font-size:6.607px;color:#333;font-weight:normal;font-style:normal;">Can default</div>
<div class="a" style="left:656.2px;top:381.6px;width:8px;height:8px;border:1px solid #a9a9a9;border-radius:1.5px;background:linear-gradient(#eeeeee,#fafafa)"></div>
<div class="t" style="left:669px;top:381px;line-height:10px;font-size:6.631px;color:#333;font-weight:normal;font-style:normal;">Application paintable</div>
<div class="a" style="left:757.4px;top:348px;width:8px;height:8px;border:1px solid #a9a9a9;border-radius:1.5px;background:linear-gradient(#eeeeee,#fafafa)"></div>
<div class="t" style="left:769.9px;top:347px;line-height:10px;font-size:6.634px;color:#333;font-weight:normal;font-style:normal;">Has focus</div>
<div class="a" style="left:757.4px;top:365px;width:8px;height:8px;border:1px solid #a9a9a9;border-radius:1.5px;background:linear-gradient(#eeeeee,#fafafa)"></div>
<div class="t" style="left:769.9px;top:364px;line-height:10px;font-size:6.621px;color:#333;font-weight:normal;font-style:normal;">Has default</div>
<div class="a" style="left:757.4px;top:381.6px;width:8px;height:8px;border:1px solid #7a9462;border-radius:1.5px;background:#97b779"></div>
<svg class="a" style="left:759.4px;top:383.6px" width="4" height="4" viewBox="0 0 4 4"><path d="M.6 .6L3.4 3.4M3.4 .6L.6 3.4" stroke="#f6f9f3" stroke-width="1.15"/></svg>
<div class="t" style="left:769.9px;top:381px;line-height:10px;font-size:6.658px;color:#333;font-weight:normal;font-style:normal;">Double Buffered</div>
<div class="a" style="left:911px;top:348px;width:8px;height:8px;border:1px solid #a9a9a9;border-radius:1.5px;background:linear-gradient(#eeeeee,#fafafa)"></div>
<div class="t" style="left:923.3px;top:347px;line-height:10px;font-size:6.557px;color:#333;font-weight:normal;font-style:normal;">Is focus</div>
<div class="a" style="left:911px;top:365px;width:8px;height:8px;border:1px solid #a9a9a9;border-radius:1.5px;background:linear-gradient(#eeeeee,#fafafa)"></div>
<div class="t" style="left:923.3px;top:364px;line-height:10px;font-size:6.587px;color:#333;font-weight:normal;font-style:normal;">Receives default</div>
<div class="t" style="left:648.5px;top:396px;line-height:10px;font-size:6.6px;color:#333;font-weight:bold;font-style:normal;transform:scaleX(0.9748);transform-origin:0 0;">Widget Spacing</div>
<div class="t" style="left:655.4px;top:409px;line-height:10px;font-size:6.6px;color:#3a3a3a;font-weight:normal;font-style:normal;transform:scaleX(0.9693);transform-origin:0 0;">Expand</div>
<div class="t" style="left:763.3px;top:409px;line-height:10px;font-size:6.746px;color:#3a3a3a;font-weight:normal;font-style:normal;">Alignment</div>
<div class="t" style="left:662px;top:426px;line-height:10px;font-size:6.839px;color:#a8a8a8;font-weight:normal;font-style:normal;">Horizontal:</div>
<div class="t" style="left:670.8px;top:446px;line-height:10px;font-size:6.718px;color:#a8a8a8;font-weight:normal;font-style:normal;">Vertical:</div>
<div class="a" style="left:700.1px;top:426.5px;width:7.7px;height:7.5px;border:1px solid #b8b8b8;border-radius:1.5px;background:#f6f6f6"></div>
<div class="a" style="left:700.1px;top:446.5px;width:7.7px;height:7.5px;border:1px solid #b8b8b8;border-radius:1.5px;background:#f6f6f6"></div>
<div class="a" style="left:712.1px;top:424.7px;width:40.4px;height:11.2px;border:1px solid #bdbdbd;border-radius:2px;background:#dadada"></div>
<div class="a" style="left:713.1px;top:425.7px;width:19.3px;height:9.2px;background:linear-gradient(#d6d6d6,#d0d0d0);border-right:1px solid #c2c2c2"></div>
<div class="t" style="left:736.3px;top:426px;line-height:10px;font-size:7px;color:#8a8a8a;font-weight:bold;font-style:normal;transform:scaleX(0.8286);transform-origin:0 0;">OFF</div>
<div class="a" style="left:712.1px;top:444.9px;width:40.4px;height:11.2px;border:1px solid #bdbdbd;border-radius:2px;background:#dadada"></div>
<div class="a" style="left:713.1px;top:445.9px;width:19.3px;height:9.2px;background:linear-gradient(#d6d6d6,#d0d0d0);border-right:1px solid #c2c2c2"></div>
<div class="t" style="left:736.3px;top:446px;line-height:10px;font-size:7px;color:#8a8a8a;font-weight:bold;font-style:normal;transform:scaleX(0.8286);transform-origin:0 0;">OFF</div>
<div class="t" style="left:808px;top:426px;line-height:10px;font-size:6.902px;color:#3a3a3a;font-weight:normal;font-style:normal;">Horizontal:</div>
<div class="t" style="left:817.3px;top:447px;line-height:10px;font-size:6.661px;color:#3a3a3a;font-weight:normal;font-style:normal;">Vertical:</div>
<div class="a" style="left:845.2px;top:423.2px;width:142.5px;height:14.8px;border:1px solid #a9a9a9;border-radius:2px;background:linear-gradient(#f2f2f2,#dcdcdc);box-shadow:0 1px 1px rgba(0,0,0,.12)"></div>
<div class="t" style="left:849px;top:426px;line-height:10px;font-size:6.7px;color:#333;font-weight:normal;font-style:normal;transform:scaleX(0.9342);transform-origin:0 0;">Fill</div>
<svg class="a" style="left:977px;top:428.7px" width="6" height="4" viewBox="0 0 6 4"><path d="M.2 .2h5.4L2.9 3.4z" fill="#222"/></svg>
<div class="a" style="left:845.2px;top:443.6px;width:142.5px;height:14.8px;border:1px solid #a9a9a9;border-radius:2px;background:linear-gradient(#f2f2f2,#dcdcdc);box-shadow:0 1px 1px rgba(0,0,0,.12)"></div>
<div class="t" style="left:849px;top:447px;line-height:10px;font-size:6.7px;color:#333;font-weight:normal;font-style:normal;transform:scaleX(0.9342);transform-origin:0 0;">Fill</div>
<svg class="a" style="left:977px;top:449.1px" width="6" height="4" viewBox="0 0 6 4"><path d="M.2 .2h5.4L2.9 3.4z" fill="#222"/></svg>
<div class="t" style="left:655.4px;top:465px;line-height:10px;font-size:6.69px;color:#3a3a3a;font-weight:normal;font-style:normal;">Margins</div>
<div class="a" style="left:698.6px;top:479.7px;width:53.89999999999998px;height:14.5px;border:1px solid #a9a9a9;border-radius:2px;background:linear-gradient(#e9e9e9,#f6f6f6)"></div>
<div class="a" style="left:725.5px;top:480.2px;width:13.100000000000023px;height:13.5px;border-left:1px solid #c4c4c4;background:#d2d2d2"></div>
<div class="a" style="left:738.6px;top:480.2px;width:13.399999999999977px;height:13.5px;border-left:1px solid #c4c4c4;background:linear-gradient(#f0f0f0,#dcdcdc);border-radius:0 2px 2px 0"></div>
<div class="a" style="left:729.25px;top:486.35px;width:5.6px;height:1.3px;background:#9a9a9a"></div>
<div class="a" style="left:742.75px;top:486.35px;width:5.6px;height:1.3px;background:#222"></div>
<div class="a" style="left:744.9px;top:484.15px;width:1.3px;height:5.6px;background:#222"></div>
<div class="t" style="left:701.6px;top:483px;line-height:10px;font-size:6.8px;color:#333;font-weight:normal;font-style:normal;transform:scaleX(0.9518);transform-origin:0 0;">0</div>
<div class="a" style="left:698.6px;top:499px;width:53.89999999999998px;height:14.5px;border:1px solid #a9a9a9;border-radius:2px;background:linear-gradient(#e9e9e9,#f6f6f6)"></div>
<div class="a" style="left:725.5px;top:499.5px;width:13.100000000000023px;height:13.5px;border-left:1px solid #c4c4c4;background:linear-gradient(#ececec,#d8d8d8)"></div>
<div class="a" style="left:738.6px;top:499.5px;width:13.399999999999977px;height:13.5px;border-left:1px solid #c4c4c4;background:linear-gradient(#f0f0f0,#dcdcdc);border-radius:0 2px 2px 0"></div>
<div class="a" style="left:729.25px;top:505.65px;width:5.6px;height:1.3px;background:#2a2a2a"></div>
<div class="a" style="left:742.75px;top:505.65px;width:5.6px;height:1.3px;background:#222"></div>
<div class="a" style="left:744.9px;top:503.45px;width:1.3px;height:5.6px;background:#222"></div>
<div class="t" style="left:701.6px;top:502px;line-height:10px;font-size:6.8px;color:#333;font-weight:normal;font-style:normal;transform:scaleX(0.9518);transform-origin:0 0;">8</div>
<div class="a" style="left:845.4px;top:479.6px;width:142.20000000000005px;height:14.5px;border:1px solid #a9a9a9;border-radius:2px;background:linear-gradient(#e9e9e9,#f6f6f6)"></div>
<div class="a" style="left:960.1px;top:480.1px;width:14.699999999999932px;height:13.5px;border-left:1px solid #c4c4c4;background:#d2d2d2"></div>
<div class="a" style="left:974.8px;top:480.1px;width:12.300000000000068px;height:13.5px;border-left:1px solid #c4c4c4;background:linear-gradient(#f0f0f0,#dcdcdc);border-radius:0 2px 2px 0"></div>
<div class="a" style="left:964.65px;top:486.25px;width:5.6px;height:1.3px;background:#9a9a9a"></div>
<div class="a" style="left:978.4px;top:486.25px;width:5.6px;height:1.3px;background:#222"></div>
<div class="a" style="left:980.55px;top:484.05px;width:1.3px;height:5.6px;background:#222"></div>
<div class="t" style="left:848.4px;top:483px;line-height:10px;font-size:6.8px;color:#333;font-weight:normal;font-style:normal;transform:scaleX(0.9518);transform-origin:0 0;">0</div>
<div class="a" style="left:845.4px;top:499.4px;width:142.20000000000005px;height:14.5px;border:1px solid #a9a9a9;border-radius:2px;background:linear-gradient(#e9e9e9,#f6f6f6)"></div>
<div class="a" style="left:960.1px;top:499.9px;width:14.699999999999932px;height:13.5px;border-left:1px solid #c4c4c4;background:#d2d2d2"></div>
<div class="a" style="left:974.8px;top:499.9px;width:12.300000000000068px;height:13.5px;border-left:1px solid #c4c4c4;background:linear-gradient(#f0f0f0,#dcdcdc);border-radius:0 2px 2px 0"></div>
<div class="a" style="left:964.65px;top:506.05px;width:5.6px;height:1.3px;background:#9a9a9a"></div>
<div class="a" style="left:978.4px;top:506.05px;width:5.6px;height:1.3px;background:#222"></div>
<div class="a" style="left:980.55px;top:503.85px;width:1.3px;height:5.6px;background:#222"></div>
<div class="t" style="left:848.4px;top:502px;line-height:10px;font-size:6.8px;color:#333;font-weight:normal;font-style:normal;transform:scaleX(0.9518);transform-origin:0 0;">0</div>
<div class="t" style="left:681.9px;top:483px;line-height:10px;font-size:6.77px;color:#333;font-weight:normal;font-style:normal;">Top:</div>
<div class="t" style="left:672px;top:502px;line-height:10px;font-size:6.7px;color:#333;font-weight:normal;font-style:italic;transform:scaleX(0.9829);transform-origin:0 0;">Bottom:</div>
<div class="t" style="left:827.5px;top:483px;line-height:10px;font-size:7.088px;color:#3a3a3a;font-weight:normal;font-style:normal;">Left:</div>
<div class="t" style="left:823.6px;top:502px;line-height:10px;font-size:6.775px;color:#3a3a3a;font-weight:normal;font-style:normal;">Right:</div>
<div class="t" style="left:655.2px;top:524px;line-height:10px;font-size:6.653px;color:#a8a8a8;font-weight:normal;font-style:normal;">Width request:</div>
<div class="t" style="left:655.2px;top:543px;line-height:10px;font-size:6.634px;color:#a8a8a8;font-weight:normal;font-style:normal;">Height request:</div>
<div class="a" style="left:759px;top:524.4px;width:7.9px;height:7.6px;border:1px solid #b8b8b8;border-radius:1.5px;background:#f6f6f6"></div>
<div class="a" style="left:759px;top:544px;width:7.9px;height:7.6px;border:1px solid #b8b8b8;border-radius:1.5px;background:#f6f6f6"></div>
<div class="a" style="left:771px;top:521.4px;width:270px;height:14.4px;border:1px solid #c0c0c0;border-radius:2px;background:#d9d9d9"></div>
<div class="a" style="left:1019px;top:521.9px;width:15px;height:13.4px;border-left:1px solid #c8c8c8;background:#d6d6d6"></div>
<div class="a" style="left:1022.5px;top:528.0px;width:5.6px;height:1.2px;background:#a0a0a0"></div>
<div class="a" style="left:1034px;top:521.9px;width:5px;height:13.4px;border-left:1px solid #c8c8c8;background:#d6d6d6"></div>
<div class="a" style="left:1037px;top:528.0px;width:2px;height:1.2px;background:#a0a0a0"></div>
<div class="t" style="left:775px;top:524px;line-height:10px;font-size:6.8px;color:#a8a8a8;font-weight:normal;font-style:normal;transform:scaleX(0.7595);transform-origin:0 0;">-1</div>
<div class="a" style="left:771px;top:541.2px;width:270px;height:14.4px;border:1px solid #c0c0c0;border-radius:2px;background:#d9d9d9"></div>
<div class="a" style="left:1019px;top:541.7px;width:15px;height:13.4px;border-left:1px solid #c8c8c8;background:#d6d6d6"></div>
<div class="a" style="left:1022.5px;top:547.8000000000001px;width:5.6px;height:1.2px;background:#a0a0a0"></div>
<div class="a" style="left:1034px;top:541.7px;width:5px;height:13.4px;border-left:1px solid #c8c8c8;background:#d6d6d6"></div>
<div class="a" style="left:1037px;top:547.8000000000001px;width:2px;height:1.2px;background:#a0a0a0"></div>
<div class="t" style="left:775px;top:544px;line-height:10px;font-size:6.8px;color:#a8a8a8;font-weight:normal;font-style:normal;transform:scaleX(0.7595);transform-origin:0 0;">-1</div>
</body></html>
